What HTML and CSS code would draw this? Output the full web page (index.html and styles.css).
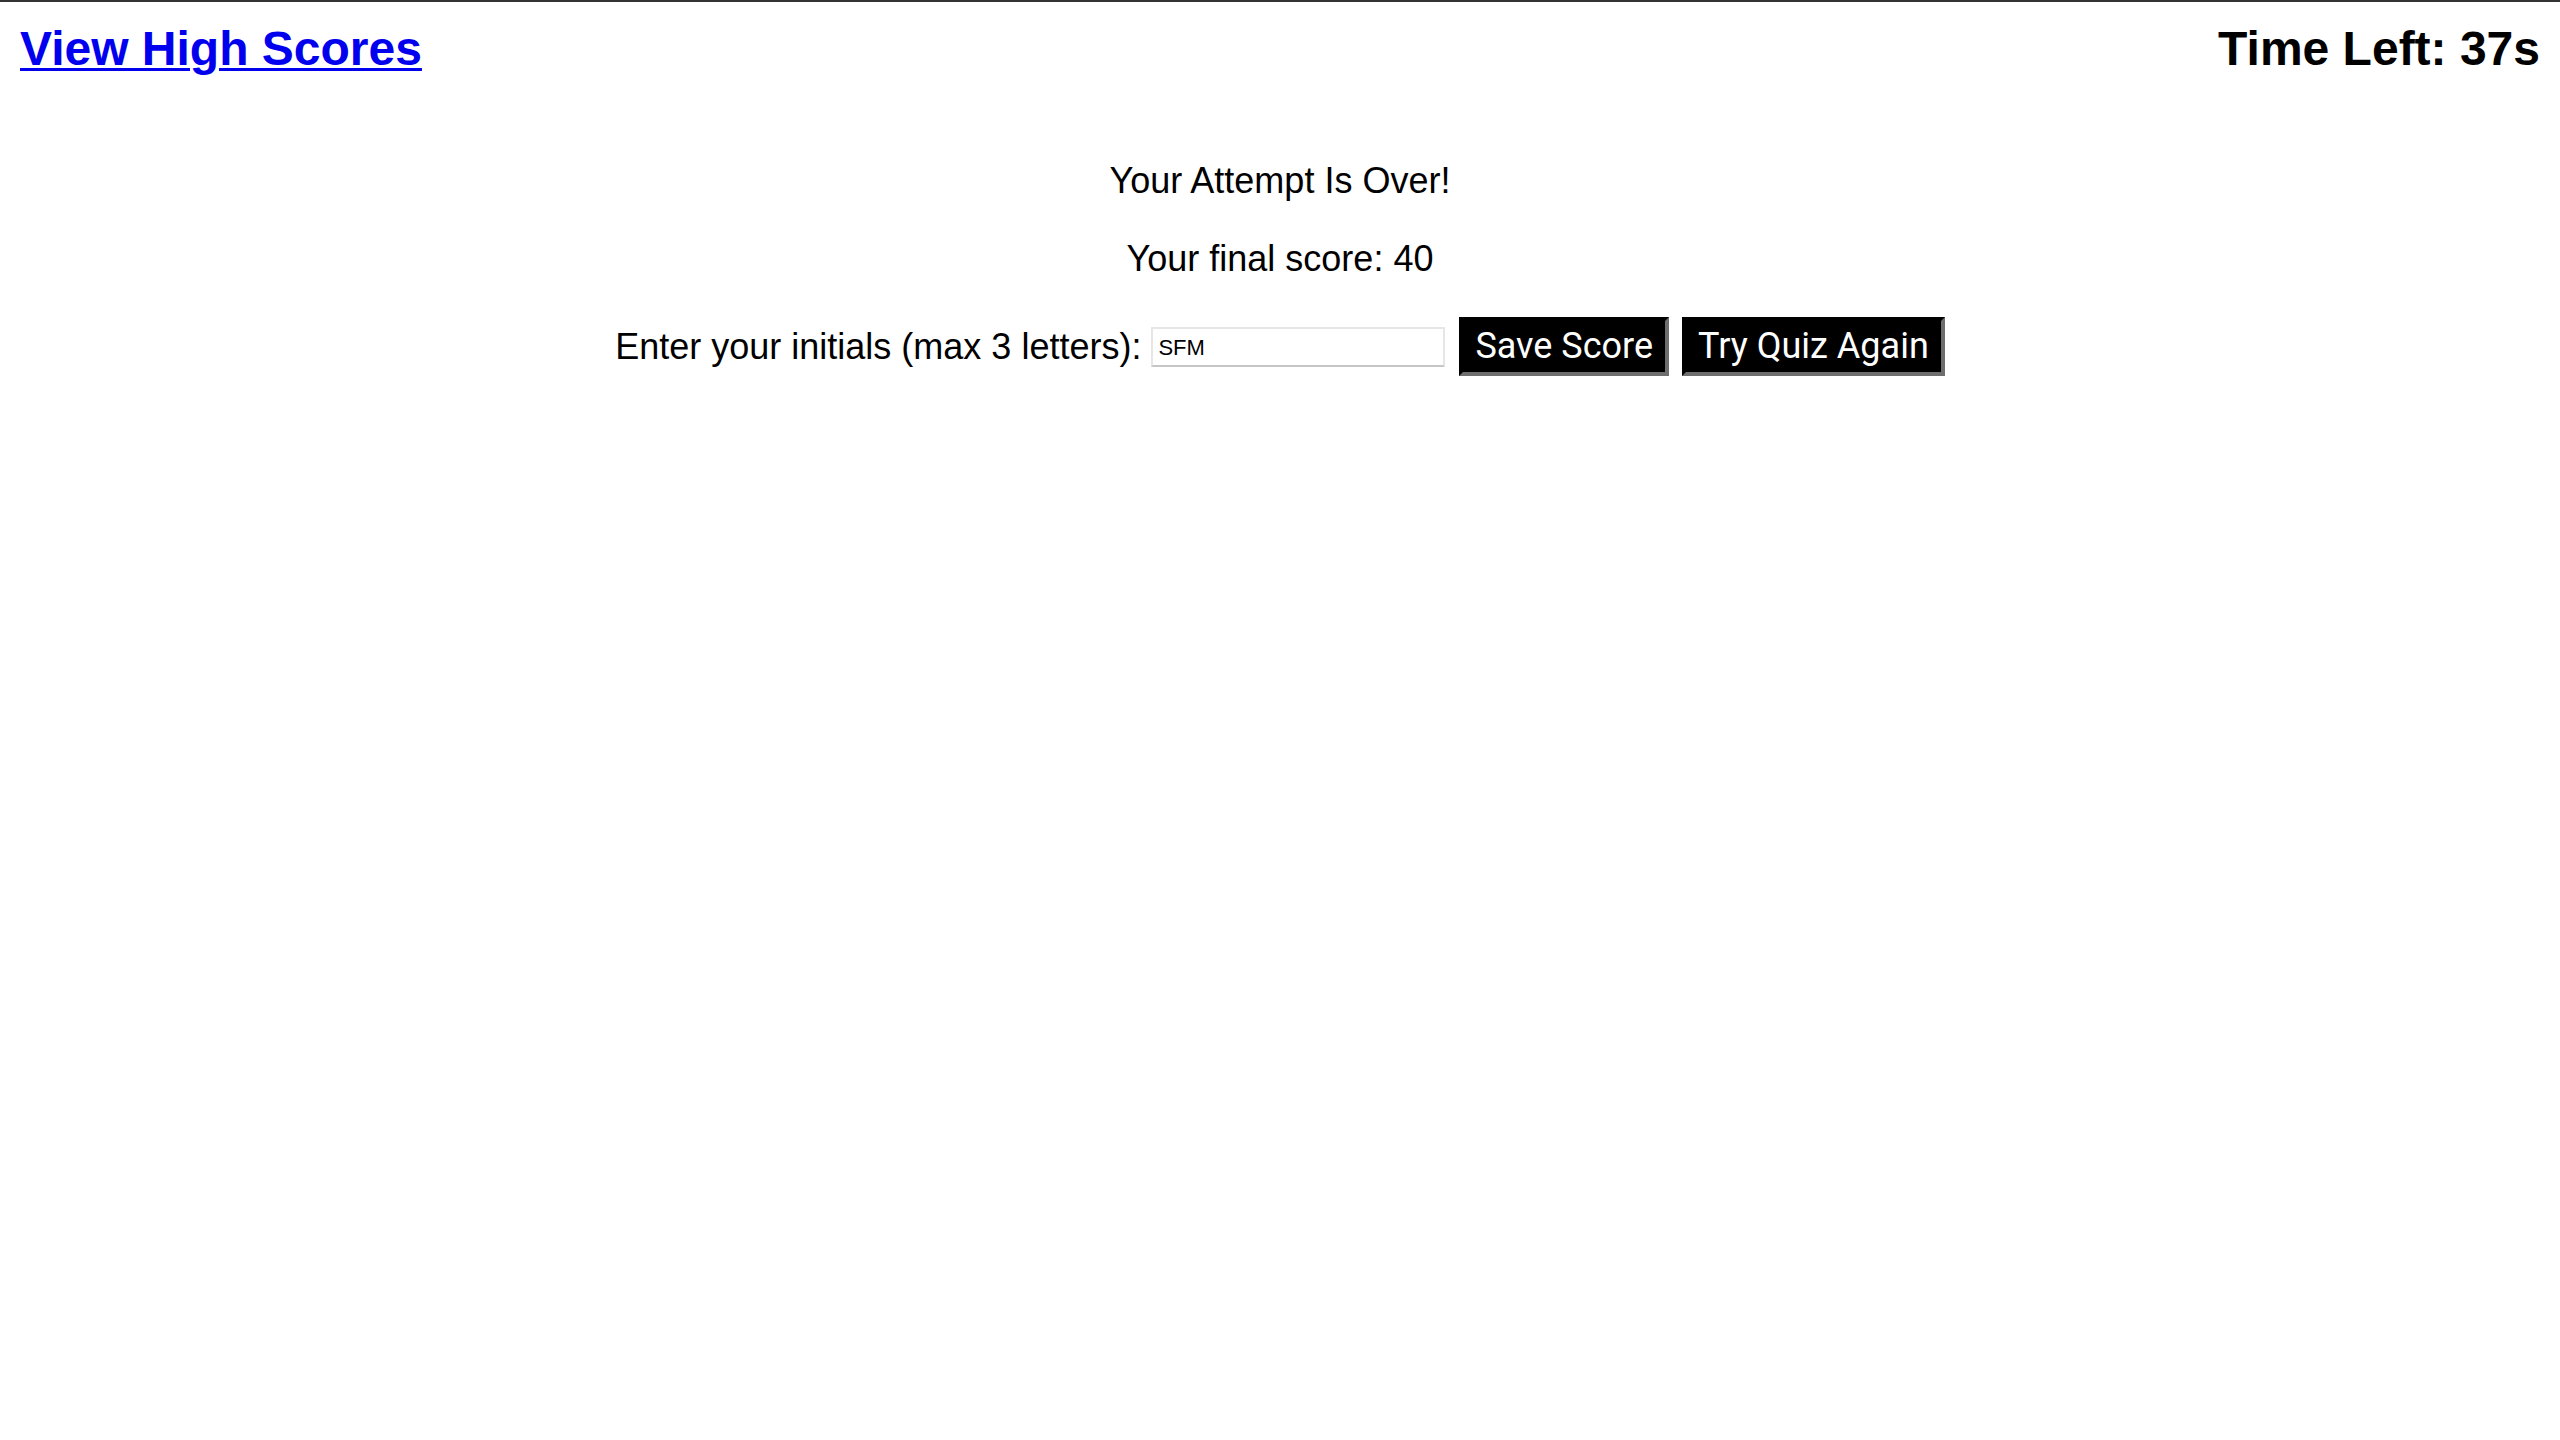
FILE: index.html
```html
<!DOCTYPE html>
<html lang="en">
<head>
<meta charset="utf-8">
<title>Quiz</title>
<link rel="stylesheet" href="styles.css">
</head>
<body>
<header class="top-bar">
  <a class="scores-link" href="#">View High Scores</a>
  <div class="timer">Time Left: 37s</div>
</header>
<main class="result">
  <p class="result-title">Your Attempt Is Over!</p>
  <p class="result-score">Your final score: 40</p>
  <form class="score-form">
    <label class="initials-label" for="initials">Enter your initials (max 3 letters):</label>
    <input class="initials-input" id="initials" type="text" maxlength="3" value="SFM">
    <button class="btn btn-save" type="button">Save Score</button>
    <button class="btn btn-retry" type="button">Try Quiz Again</button>
  </form>
</main>
</body>
</html>
```

FILE: styles.css
```css
html, body {
  margin: 0;
  padding: 0;
}

body {
  border-top: 2px solid #333;
  background: #fff;
  color: #000;
  font-family: "Liberation Sans", Arial, Helvetica, sans-serif;
}

.top-bar {
  display: flex;
  justify-content: space-between;
  align-items: center;
  padding: 19px 20px 0 20px;
  font-size: 48px;
  font-weight: bold;
  line-height: 55px;
}

.scores-link {
  color: #0000ee;
  text-decoration: underline;
  text-decoration-thickness: 3px;
  text-underline-offset: 3px;
}

.timer {
  color: #000;
}

.result {
  margin-top: 84px;
  text-align: center;
  font-size: 36px;
  line-height: 41px;
}

.result-title {
  margin: 0;
}

.result-score {
  margin: 37px 0 0;
}

.score-form {
  display: flex;
  justify-content: center;
  align-items: center;
  margin-top: 38px;
}

.initials-label {
  margin-right: 10px;
}

.initials-input {
  box-sizing: border-box;
  width: 294px;
  height: 40px;
  margin: 0 14px 0 0;
  padding: 2px 5px 0;
  border: 2px solid #e6e6e6;
  border-bottom-color: #c6c6c6;
  border-radius: 0;
  font-family: "Liberation Sans", Arial, sans-serif;
  font-size: 22px;
  color: #000;
  background: #fff;
  outline: none;
}

.btn {
  margin: 0;
  padding: 5px 12px;
  border-style: solid;
  border-width: 4px;
  border-color: #000 #6e6e6e #6e6e6e #000;
  background: #000;
  color: #fff;
  font-family: Roboto, "Liberation Sans", sans-serif;
  font-size: 36px;
  line-height: 41px;
  border-radius: 0;
  cursor: pointer;
}

.btn-save {
  margin-right: 13px;
}
```
